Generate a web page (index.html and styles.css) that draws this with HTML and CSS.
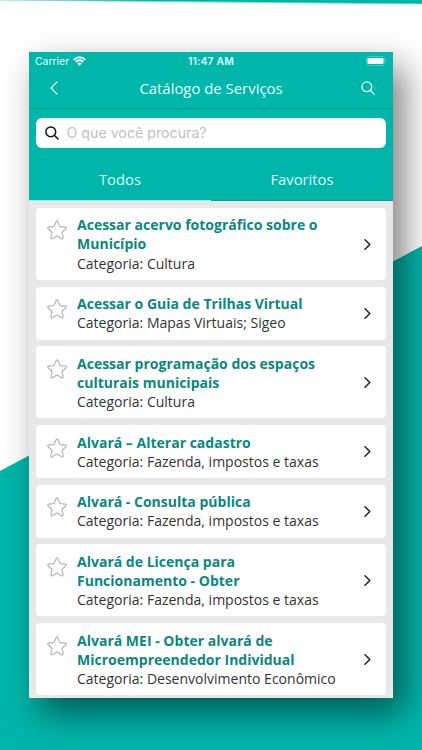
FILE: index.html
```html
<!DOCTYPE html>
<html lang="pt-BR">

<head>
  <meta charset="UTF-8">
  <meta name="viewport" content="width=device-width, initial-scale=1.0">
  <title>Catálogo de Serviços</title>
  <link rel="stylesheet" href="styles.css">
</head>

<body>
  <!-- Shared icons -->
  <svg class="sprite" aria-hidden="true">
    <symbol id="star" viewBox="0 0 20 20">
      <path d="M9.2 1.6Q10 .2 10.8 1.6L12.8 6Q13 6.5 13.6 6.6L18.4 7.1Q19.9 7.5 18.9 8.7L15.4 12Q15 12.4 15.1 13L16.1 17.6Q16.2 19.3 14.7 18.7L10.6 16.3Q10 16 9.4 16.3L5.3 18.7Q3.8 19.3 3.9 17.6L4.9 13Q5 12.4 4.6 12L1.1 8.7Q.1 7.5 1.6 7.1L6.4 6.6Q7 6.5 7.2 6Z" />
    </symbol>
    <symbol id="chevron" viewBox="0 0 7 11">
      <path d="M1 .8L5.8 5.5L1 10.2" />
    </symbol>
    <symbol id="search" viewBox="0 0 14 14">
      <circle cx="5.8" cy="5.8" r="4.9" />
      <path d="M9.3 9.3L13 13" />
    </symbol>
  </svg>

  <div class="phone">
    <header class="header">
      <div class="status-bar">
        <div class="carrier">
          <span>Carrier</span>
          <svg class="wifi" viewBox="0 0 13 10">
            <path d="M.7 3.7Q6.5 -1.4 12.3 3.7" />
            <path d="M2.7 5.9Q6.5 2.6 10.3 5.9" />
            <path class="wifi-dot" d="M4.3 7.4Q6.5 5.7 8.7 7.4L6.5 9.7Z" />
          </svg>
        </div>
        <span class="time">11:47 AM</span>
        <svg class="battery" viewBox="0 0 21 10">
          <rect class="battery-case" x=".5" y=".5" width="18" height="9" rx="2.5" />
          <rect class="battery-level" x="1.5" y="2" width="16" height="6" rx="1" />
          <path class="battery-case" d="M20.2 4V6" />
        </svg>
      </div>

      <div class="nav-bar">
        <svg class="back" viewBox="0 0 8 14">
          <path d="M7 .8L1 7L7 13.2" />
        </svg>
        <h1>Catálogo de Serviços</h1>
        <svg class="nav-search"><use href="#search" /></svg>
      </div>
    </header>

    <div class="search-box">
      <svg class="search-icon"><use href="#search" /></svg>
      <input type="text" placeholder="O que você procura?">
    </div>

    <nav class="tabs">
      <div class="tab active">Todos</div>
      <div class="tab">Favoritos</div>
    </nav>

    <main class="list">
      <div class="card">
        <svg class="star"><use href="#star" /></svg>
        <div class="card-body">
          <h2>Acessar acervo fotográfico sobre o<br>Município</h2>
          <p>Categoria: Cultura</p>
        </div>
        <svg class="chevron"><use href="#chevron" /></svg>
      </div>
      <div class="card">
        <svg class="star"><use href="#star" /></svg>
        <div class="card-body">
          <h2>Acessar o Guia de Trilhas Virtual</h2>
          <p>Categoria: Mapas Virtuais; Sigeo</p>
        </div>
        <svg class="chevron"><use href="#chevron" /></svg>
      </div>
      <div class="card">
        <svg class="star"><use href="#star" /></svg>
        <div class="card-body">
          <h2>Acessar programação dos espaços<br>culturais municipais</h2>
          <p>Categoria: Cultura</p>
        </div>
        <svg class="chevron"><use href="#chevron" /></svg>
      </div>
      <div class="card">
        <svg class="star"><use href="#star" /></svg>
        <div class="card-body">
          <h2>Alvará – Alterar cadastro</h2>
          <p>Categoria: Fazenda, impostos e taxas</p>
        </div>
        <svg class="chevron"><use href="#chevron" /></svg>
      </div>
      <div class="card">
        <svg class="star"><use href="#star" /></svg>
        <div class="card-body">
          <h2>Alvará - Consulta pública</h2>
          <p>Categoria: Fazenda, impostos e taxas</p>
        </div>
        <svg class="chevron"><use href="#chevron" /></svg>
      </div>
      <div class="card">
        <svg class="star"><use href="#star" /></svg>
        <div class="card-body">
          <h2>Alvará de Licença para<br>Funcionamento - Obter</h2>
          <p>Categoria: Fazenda, impostos e taxas</p>
        </div>
        <svg class="chevron"><use href="#chevron" /></svg>
      </div>
      <div class="card">
        <svg class="star"><use href="#star" /></svg>
        <div class="card-body">
          <h2>Alvará MEI - Obter alvará de<br>Microempreendedor Individual</h2>
          <p>Categoria: Desenvolvimento Econômico</p>
        </div>
        <svg class="chevron"><use href="#chevron" /></svg>
      </div>
    </main>
  </div>
</body>

</html>
```

FILE: styles.css
```css
* {
  margin: 0;
  padding: 0;
  box-sizing: border-box;
}

body {
  width: 422px;
  height: 750px;
  overflow: hidden;
  padding: 52px 29px 0;
  font-family: 'Open Sans', 'Noto Sans', sans-serif;
  background:
    linear-gradient(to bottom left, #00b5a9 38%, transparent 62%) 0 0 / 422px 4px no-repeat,
    linear-gradient(to bottom right, transparent 49.9%, #00b5a9 50.1%) 0 246px / 422px 225px no-repeat,
    linear-gradient(#00b5a9, #00b5a9) 0 471px / 422px 279px no-repeat,
    #fff;
}

.sprite {
  display: none;
}

svg {
  flex: none;
  fill: none;
  stroke-linecap: round;
  stroke-linejoin: round;
}

.phone {
  width: 364px;
  height: 646px;
  overflow: hidden;
  background: #00b5a9;
  box-shadow: 11px 15px 32px rgba(0, 0, 0, 0.5);
}

.header {
  height: 57px;
  border-bottom: 1px solid #00a198;
  color: #e0fffb;
}

.status-bar {
  display: grid;
  grid-template-columns: 1fr auto 1fr;
  align-items: center;
  height: 18px;
  padding: 0 6px;
  font-family: Inter, sans-serif;
  font-size: 10.4px;
}

.carrier {
  display: flex;
  align-items: center;
  gap: 4px;
}

.wifi {
  width: 13px;
  height: 10px;
  stroke: #fff;
  stroke-width: 1.9;
  stroke-linecap: butt;
}

.wifi .wifi-dot {
  fill: #fff;
  stroke: none;
}

.time {
  font-weight: 600;
  letter-spacing: 0.15px;
}

.battery {
  justify-self: end;
  width: 21px;
  height: 10px;
}

.battery-case {
  stroke: #3fccc2;
}

.battery-level {
  fill: #fff;
}

.nav-bar {
  display: flex;
  align-items: center;
  justify-content: space-between;
  height: 36px;
  padding: 0 18px 0 21px;
}

.nav-bar h1 {
  margin-left: 3px;
  font-size: 14.9px;
  font-weight: 400;
}

.back {
  width: 8px;
  height: 14px;
  stroke: #e0fffb;
  stroke-width: 1.2;
}

.nav-search {
  width: 14px;
  height: 14px;
  stroke: #e0fffb;
  stroke-width: 1.3;
}

.search-box {
  display: flex;
  align-items: center;
  gap: 8px;
  height: 30.5px;
  margin: 8.5px 7px 0;
  padding: 0 8.5px;
  border-radius: 6px;
  background: #fff;
}

.search-icon {
  width: 14px;
  height: 14px;
  stroke: #111;
  stroke-width: 1.5;
}

.search-box input {
  flex: 1;
  border: none;
  outline: none;
  font-family: Inter, sans-serif;
  font-size: 14.2px;
}

.search-box input::placeholder {
  color: #c0c0c4;
}

.tabs {
  display: flex;
  height: 53px;
}

.tab {
  flex: 1;
  padding-top: 11px;
  border-bottom: 1.5px solid #0a9f96;
  color: #d8fffa;
  font-size: 14.8px;
  line-height: 40px;
  text-align: center;
}

.tab.active {
  border-bottom-color: #8ff0e6;
}

.list {
  display: flex;
  flex-direction: column;
  gap: 6.9px;
  height: 497px;
  padding: 7px;
  background: #e8e8e8;
}

.card {
  display: flex;
  flex: none;
  align-items: center;
  padding: 7.4px 15.5px 7.2px 10.5px;
  border-radius: 4px;
  background: #fff;
}

.star {
  align-self: flex-start;
  width: 20px;
  height: 20px;
  margin-top: 5px;
  stroke: #b5b5b5;
  stroke-width: 1.2;
}

.card-body {
  flex: 1;
  margin-left: 10.5px;
  font-size: 14.03px;
  line-height: 19.1px;
  white-space: nowrap;
}

.card-body h2 {
  color: #0b877d;
  font-size: inherit;
  font-weight: 700;
}

.card-body p {
  color: #333;
}

.chevron {
  width: 7px;
  height: 11px;
  stroke: #222;
  stroke-width: 1.5;
}
```
